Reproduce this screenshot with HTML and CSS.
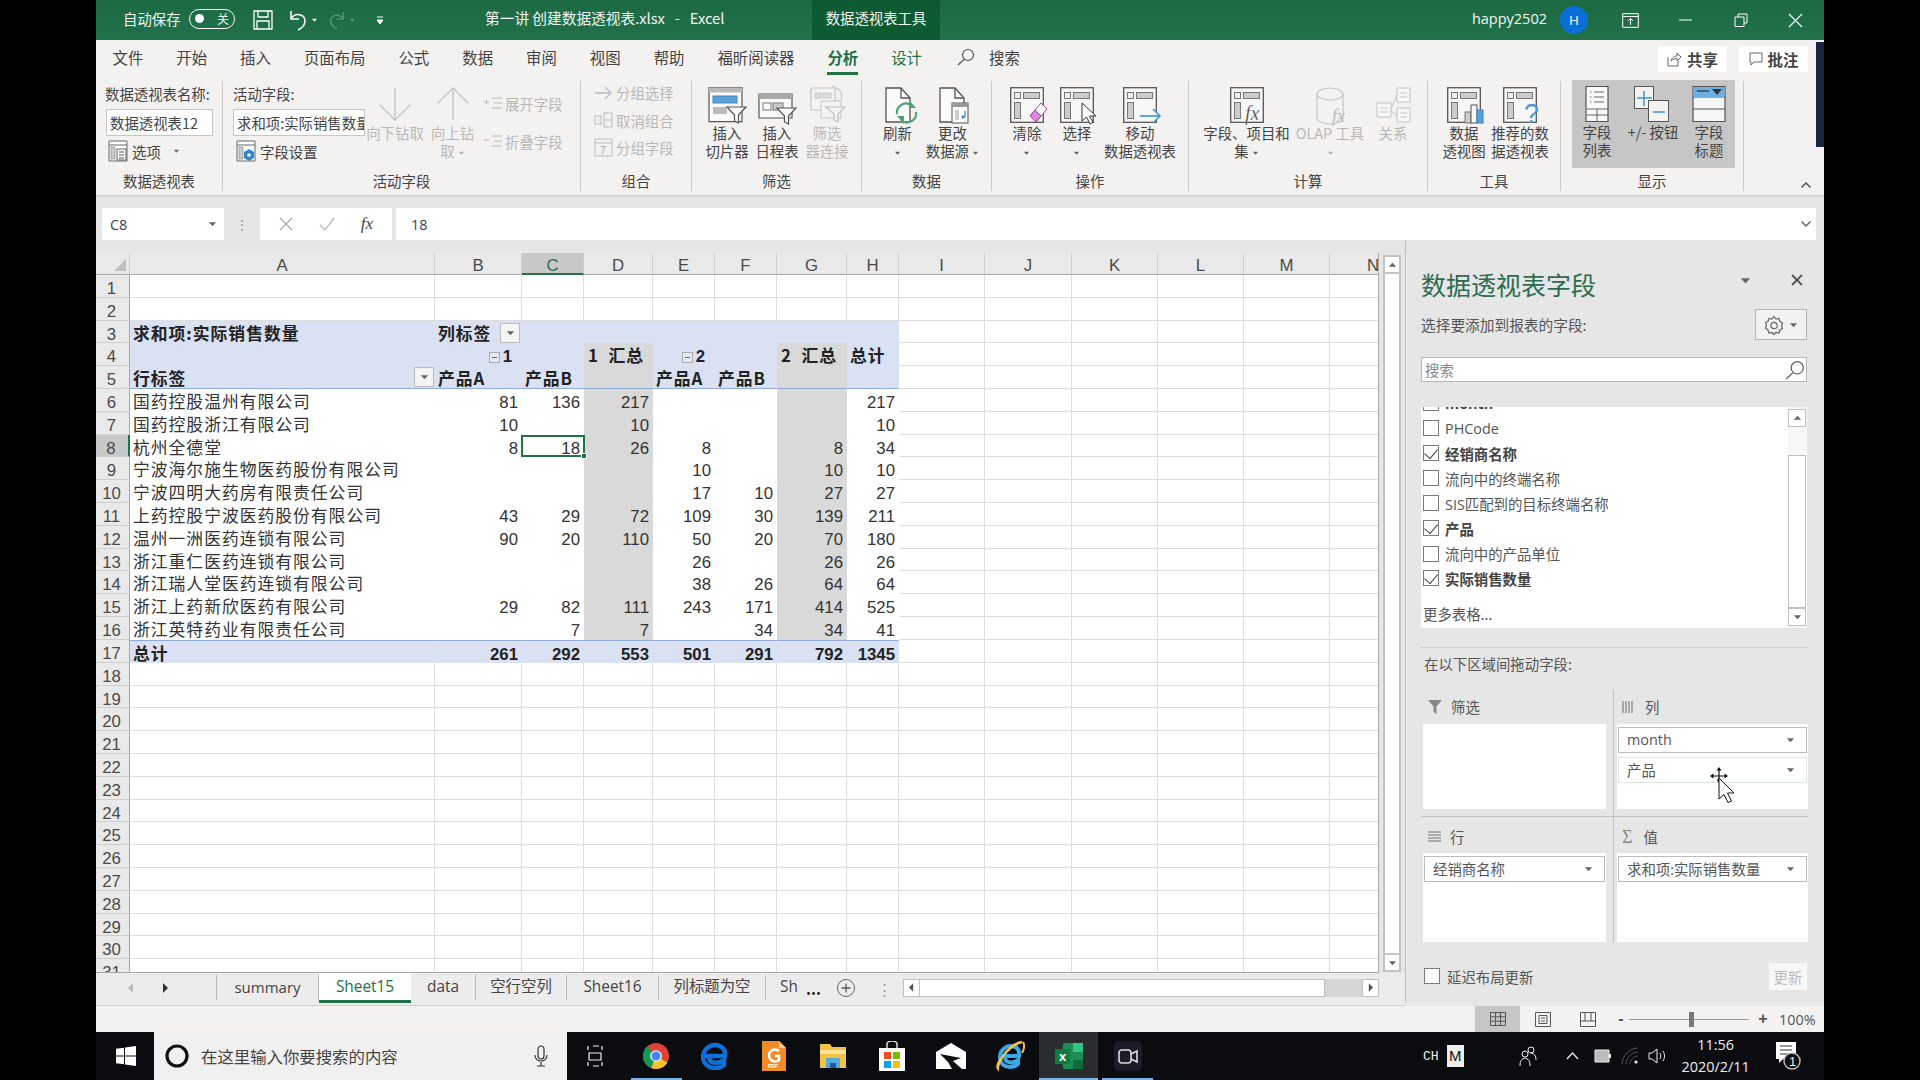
FILE: index.html
```html
<!DOCTYPE html>
<html lang="zh-CN">
<head>
<meta charset="utf-8">
<title>第一讲 创建数据透视表.xlsx - Excel</title>
<link rel="stylesheet" href="styles.css">
</head>
<body>
<svg class="defs" width="0" height="0">
  <symbol id="pv" viewBox="0 0 34 36">
    <rect x=".7" y=".7" width="32.6" height="34.6" fill="#f7f7f7" stroke="#555" stroke-width="1.3"/>
    <rect x="4.5" y="5.5" width="6" height="6" fill="#eee" stroke="#777"/>
    <rect x="13.5" y="5.5" width="16" height="6" fill="#ccc" stroke="#777"/>
    <rect x="4.5" y="15.5" width="6" height="16" fill="#ccc" stroke="#777"/>
  </symbol>
  <symbol id="doc" viewBox="0 0 26 36">
    <path d="M1 1h15l9 10v24H1z" fill="#fbfbfb" stroke="#555" stroke-width="1.3"/>
    <path d="M16 1v10h9" fill="none" stroke="#555" stroke-width="1.3"/>
  </symbol>
  <symbol id="dd" viewBox="0 0 10 6"><path d="M1 1h8L5 5.5z" fill="#666"/></symbol>
</svg>
<div class="app">
  <header class="titlebar">
    <div class="qa">
      <span class="qa-label">自动保存</span>
      <span class="toggle"><i class="knob"></i><b>关</b></span>
      <svg class="q-save" width="20" height="20" viewBox="0 0 20 20"><path d="M1 1h18v18H1z M5 1v6h10V1 M4 19v-8h12v8" fill="none" stroke="#fff" stroke-width="1.3"/></svg>
      <svg class="q-undo" width="18" height="22" viewBox="0 0 18 22"><path d="M2 2v8h8 M2 10c4-7 14-5 14 2 0 4-3 7-7 9" fill="none" stroke="#fff" stroke-width="1.5"/></svg>
      <svg class="q-car" width="7" height="4" viewBox="0 0 10 6"><path d="M1 1h8L5 5.5z" fill="#e6f0ea"/></svg>
      <svg class="q-redo" width="16" height="20" viewBox="0 0 18 22"><path d="M16 2v8H8 M16 10C12 3 2 5 2 12c0 4 3 7 7 9" fill="none" stroke="#5d9477" stroke-width="1.5"/></svg>
      <svg class="q-car" width="7" height="4" viewBox="0 0 10 6"><path d="M1 1h8L5 5.5z" fill="#5d9477"/></svg>
      <svg class="q-more" width="8" height="10" viewBox="0 0 8 10"><path d="M1 2h6M1 5h6L4 9z" stroke="#fff" fill="#fff"/></svg>
    </div>
    <div class="doc">第一讲 创建数据透视表.xlsx &nbsp;&nbsp;-&nbsp;&nbsp; Excel</div>
    <div class="tool">数据透视表工具</div>
    <div class="user">
      <span class="uname">happy2502</span>
      <span class="avatar">H</span>
      <span class="wbtn"><svg width="17" height="15" viewBox="0 0 17 15"><path d="M.7.7h15.6v13.6H.7z M.7 3.5h15.6 M8.5 12V6 M6 8l2.5-2.5L11 8" fill="none" stroke="#fff"/></svg></span>
      <span class="wbtn"><svg width="13" height="2" viewBox="0 0 13 2"><path d="M0 1h13" stroke="#fff"/></svg></span>
      <span class="wbtn"><svg width="14" height="14" viewBox="0 0 14 14"><path d="M1 4h9v9.500H1z M4 4V1h9v9h-3" fill="none" stroke="#fff"/></svg></span>
      <span class="wbtn"><svg width="15" height="15" viewBox="0 0 15 15"><path d="M1 1l13 13M14 1L1 14" stroke="#fff" stroke-width="1.2"/></svg></span>
    </div>
  </header>

  <nav class="tabs">
    <span class="tab">文件</span><span class="tab">开始</span><span class="tab">插入</span><span class="tab">页面布局</span><span class="tab">公式</span><span class="tab">数据</span><span class="tab">审阅</span><span class="tab">视图</span><span class="tab">帮助</span><span class="tab">福昕阅读器</span>
    <span class="tab tab-on">分析</span><span class="tab tab-ctx">设计</span>
    <span class="tab tab-search"><svg width="18" height="18" viewBox="0 0 18 18"><circle cx="11" cy="7" r="5.5" fill="none" stroke="#555" stroke-width="1.2"/><path d="M7 11.500L1 17" stroke="#555" stroke-width="1.2"/></svg>搜索</span>
    <span class="share"><svg width="15" height="15" viewBox="0 0 15 15"><path d="M1 5v9h10V9 M4 9c1-4 4-5 6-5V1l4 4-4 4V6.500C8 6.500 6 7 4 9z" fill="none" stroke="#666"/></svg><b>共享</b></span>
    <span class="share"><svg width="14" height="14" viewBox="0 0 14 14"><path d="M1 1h12v9H5l-3 3v-3H1z" fill="none" stroke="#666"/></svg><b>批注</b></span>
  </nav>

  <section class="ribbon">
    <div class="grp g1">
      <div class="body col">
        <div class="fl">数据透视表名称:</div>
        <div class="inp inp1">数据透视表12</div>
        <div class="sm"><svg width="20" height="22" viewBox="0 0 20 22"><path d="M1 1h18v20H1z M1 5h18" fill="#fff" stroke="#666"/><rect x="3" y="7" width="4" height="12" fill="#ccc" stroke="#777" stroke-width=".6"/><rect x="9" y="9" width="9" height="11" fill="#fff" stroke="#666"/><path d="M11 12h5M11 15h5M11 18h5" stroke="#555"/></svg>选项<svg class="car" width="7" height="4"><use href="#dd"/></svg></div>
      </div>
      <div class="glabel">数据透视表</div>
    </div>

    <div class="grp g2">
      <div class="body row">
        <div class="col af">
          <div class="fl">活动字段:</div>
          <div class="inp inp2">求和项:实际销售数量</div>
          <div class="sm"><svg width="20" height="22" viewBox="0 0 20 22"><path d="M1 1h18v20H1z M1 5h18" fill="#fff" stroke="#666"/><rect x="3" y="7" width="4" height="12" fill="#ccc" stroke="#777" stroke-width=".6"/><path d="M13 9l5 3v6l-5 3-5-3v-6z" fill="#2f86c9"/><circle cx="13" cy="15" r="1.800" fill="#fff"/></svg>字段设置</div>
        </div>
        <div class="big w60 dis"><div class="ico"><svg width="36" height="41" viewBox="0 0 36 41"><path d="M18 4v32M3 21l15 15 15-15" fill="none" stroke="#c4c4c4" stroke-width="1.400"/></svg></div><span>向下钻取</span></div>
        <div class="big w55 dis"><div class="ico"><svg width="36" height="41" viewBox="0 0 36 41"><path d="M18 36V4M3 19L18 4l15 15" fill="none" stroke="#c4c4c4" stroke-width="1.400"/></svg></div><span>向上钻<br>取 <svg class="car" width="7" height="4"><use href="#dd" opacity=".45"/></svg></span></div>
        <div class="col exp dis">
          <div class="sm2"><svg width="20" height="14" viewBox="0 0 20 14"><path d="M1 6h5M3.500 3.500v5 M9 2h10M11 7h8M9 12h10" stroke="#b9b9b9" fill="none"/></svg>展开字段</div>
          <div class="sm2"><svg width="20" height="14" viewBox="0 0 20 14"><path d="M1 6h5 M9 2h10M11 7h8M9 12h10" stroke="#b9b9b9" fill="none"/></svg>折叠字段</div>
        </div>
      </div>
      <div class="glabel">活动字段</div>
    </div>

    <div class="grp g3">
      <div class="body col grp3 dis">
        <div class="sm3"><svg width="19" height="14" viewBox="0 0 19 14"><path d="M1 7h16M11 1l6 6-6 6" fill="none" stroke="#bbb" stroke-width="1.300"/></svg>分组选择</div>
        <div class="sm3"><svg width="19" height="18" viewBox="0 0 19 18"><rect x="1" y="5" width="6" height="8" fill="none" stroke="#bbb"/><path d="M10 2h8v14h-8z M10 9h8 M3 9h2" fill="none" stroke="#bbb"/></svg>取消组合</div>
        <div class="sm3"><svg width="19" height="19" viewBox="0 0 19 19"><path d="M1 1h17v17H1z M1 5h17" fill="none" stroke="#bbb"/><text x="6" y="16" font-size="11" fill="#aaa" font-family="Liberation Sans">7</text></svg>分组字段</div>
      </div>
      <div class="glabel">组合</div>
    </div>

    <div class="grp g4">
      <div class="body row">
        <div class="big w50"><div class="ico"><svg width="44" height="41" viewBox="0 0 44 41"><path d="M4 3.700h33v34H4z" fill="#fafafa" stroke="#555" stroke-width="1.200"/><rect x="4" y="3.500" width="33" height="5" fill="#bbb"/><rect x="8" y="12" width="24" height="7" fill="#5aa2de" stroke="#4584b8"/><rect x="8" y="23" width="14" height="7" fill="#bbb"/><path d="M22 23h19l-7.500 8v8l-4-2v-6z" fill="#fafafa" stroke="#555" stroke-width="1.200"/></svg></div><span>插入<br>切片器</span></div>
        <div class="big w50"><div class="ico"><svg width="44" height="41" viewBox="0 0 44 41"><path d="M4 10h33v24H4z" fill="#fafafa" stroke="#555" stroke-width="1.200"/><rect x="4" y="10" width="33" height="5" fill="#aaa"/><rect x="8" y="19" width="8" height="7" fill="none" stroke="#777"/><rect x="18" y="19" width="10" height="7" fill="#ccc" stroke="#777"/><path d="M22 24h19l-7.500 8v8l-4-2v-6z" fill="#fafafa" stroke="#555" stroke-width="1.200"/></svg></div><span>插入<br>日程表</span></div>
        <div class="big w50 dis"><div class="ico"><svg width="44" height="41" viewBox="0 0 44 41"><path d="M6 4h24v22H6z" fill="#f3f3f3" stroke="#c4c4c4" stroke-width="1.200"/><path d="M10 9h6v5h-6z M18 9h8v5h-8z" fill="#ddd" stroke="#c8c8c8"/><path d="M27 2l6 3a9 9 0 0 1 3 11" fill="none" stroke="#c4c4c4" stroke-width="1.200"/><path d="M16 17h20v17H16z" fill="#f3f3f3" stroke="#c4c4c4"/><path d="M21 23h19l-7 7v8l-4-2v-6z" fill="#f3f3f3" stroke="#c0c0c0" stroke-width="1.200"/></svg></div><span>筛选<br>器连接</span></div>
      </div>
      <div class="glabel">筛选</div>
    </div>

    <div class="grp g5">
      <div class="body row">
        <div class="big w55"><div class="ico"><svg width="44" height="41" viewBox="0 0 44 41"><use href="#doc" x="9" y="3" width="26" height="36"/><path d="M21 30a9 9 0 0 1 15-8" fill="none" stroke="#4aa56e" stroke-width="2.200"/><path d="M33 16v8h7z" fill="#4aa56e"/><path d="M40 28a9 9 0 0 1-15 8" fill="none" stroke="#4aa56e" stroke-width="2.200"/><path d="M28 40v-8h-7z" fill="#4aa56e"/></svg></div><span>刷新<br><svg class="car" width="7" height="4"><use href="#dd"/></svg></span></div>
        <div class="big w55"><div class="ico"><svg width="44" height="41" viewBox="0 0 44 41"><use href="#doc" x="8" y="3" width="26" height="36"/><rect x="21" y="19" width="16" height="20" fill="#fafafa" stroke="#555"/><rect x="21" y="19" width="16" height="4" fill="#999"/><rect x="24" y="26" width="4" height="10" fill="#ccc"/><path d="M34 27v6h-3M32.500 31.500L31 33l1.500 1.500" fill="none" stroke="#2f86c9" stroke-width="1.200"/></svg></div><span>更改<br>数据源 <svg class="car" width="7" height="4"><use href="#dd"/></svg></span></div>
      </div>
      <div class="glabel">数据</div>
    </div>

    <div class="grp g6">
      <div class="body row">
        <div class="big w50"><div class="ico"><svg width="44" height="41" viewBox="0 0 44 41"><use href="#pv" x="5" y="3" width="34" height="36"/><path d="M25 32l11-13 6 6-11 13z" fill="#fff" stroke="#a349a4"/><path d="M25 32l5-6 6 6-5 6z" fill="#d98ad8" stroke="#a349a4"/></svg></div><span>清除<br><svg class="car" width="7" height="4"><use href="#dd"/></svg></span></div>
        <div class="big w50"><div class="ico"><svg width="44" height="41" viewBox="0 0 44 41"><use href="#pv" x="5" y="3" width="34" height="36"/><path d="M27 19v18l4.500-4 3.500 7 3-1.500-3.500-6.500H41z" fill="#fff" stroke="#333"/></svg></div><span>选择<br><svg class="car" width="7" height="4"><use href="#dd"/></svg></span></div>
        <div class="big w76"><div class="ico"><svg width="44" height="41" viewBox="0 0 44 41"><use href="#pv" x="5" y="3" width="34" height="36"/><path d="M22 32h20M35 25l7 7-7 7" fill="#f3f2f1" stroke="#2f8fd6" stroke-width="1.400"/></svg></div><span>移动<br>数据透视表</span></div>
      </div>
      <div class="glabel">操作</div>
    </div>

    <div class="grp g7">
      <div class="body row">
        <div class="big w97"><div class="ico"><svg width="44" height="41" viewBox="0 0 44 41"><use href="#pv" x="5" y="3" width="34" height="36"/><text x="20" y="36" font-family="Liberation Serif" font-style="italic" font-size="20" fill="#333" stroke="#f7f7f7" stroke-width=".3">fx</text></svg></div><span>字段、项目和<br>集 <svg class="car" width="7" height="4"><use href="#dd"/></svg></span></div>
        <div class="big w70 dis"><div class="ico"><svg width="44" height="41" viewBox="0 0 44 41"><path d="M9 10v24a13 6 0 0 0 26 0V10" fill="none" stroke="#c4c4c4" stroke-width="1.200"/><ellipse cx="22" cy="10" rx="13" ry="6" fill="none" stroke="#c4c4c4" stroke-width="1.200"/><text x="24" y="38" font-family="Liberation Serif" font-style="italic" font-size="18" fill="#bbb">fx</text></svg></div><span>OLAP 工具<br><svg class="car" width="7" height="4"><use href="#dd" opacity=".45"/></svg></span></div>
        <div class="big w56 dis"><div class="ico"><svg width="44" height="41" viewBox="0 0 44 41"><path d="M6 19h14v14H6z M26 4h13v14H26z M26 24h13v14H26z" fill="#f7f7f7" stroke="#c4c4c4"/><path d="M20 25l6-14M20 27l6 4 M9 24h8M9 28h8M29 9h7M29 13h7M29 29h7M29 33h7" fill="none" stroke="#c4c4c4"/></svg></div><span>关系</span></div>
      </div>
      <div class="glabel">计算</div>
    </div>

    <div class="grp g8">
      <div class="body row">
        <div class="big w56"><div class="ico"><svg width="44" height="41" viewBox="0 0 44 41"><use href="#pv" x="5" y="3" width="34" height="36"/><rect x="23" y="28" width="6" height="11" fill="#ccc" stroke="#777"/><rect x="29" y="21" width="6" height="18" fill="#f7f7f7" stroke="#555"/><rect x="35" y="26" width="6" height="13" fill="#5aa2de" stroke="#3d7fb5"/></svg></div><span>数据<br>透视图</span></div>
        <div class="big w56"><div class="ico"><svg width="44" height="41" viewBox="0 0 44 41"><use href="#pv" x="5" y="3" width="34" height="36"/><text x="26" y="39" font-family="Liberation Sans" font-size="27" fill="#4b97d6">?</text></svg></div><span>推荐的数<br>据透视表</span></div>
      </div>
      <div class="glabel">工具</div>
    </div>

    <div class="grp g9">
      <div class="body row on">
        <div class="big w50"><div class="ico"><svg width="44" height="41" viewBox="0 0 44 41"><path d="M11 3.500h22v35H11z" fill="#fafafa" stroke="#555" stroke-width="1.200"/><path d="M15 9h1.500M19 9h10M15 14h1.500M19 14h10M15 19h1.500M19 19h10 M11 26h22M11 32h22M22 26v12" fill="none" stroke="#666"/></svg></div><span>字段<br>列表</span></div>
        <div class="big w62"><div class="ico"><svg width="44" height="41" viewBox="0 0 44 41"><rect x="3.500" y="3.500" width="19" height="22" fill="#f3f3f3" stroke="#555"/><path d="M13 8v15M6 15h15" stroke="#3f92d2" stroke-width="1.500"/><rect x="17.500" y="17.500" width="20" height="21" fill="#f3f3f3" stroke="#555"/><path d="M22 29h12" stroke="#3f92d2" stroke-width="1.500"/></svg></div><span>+/- 按钮</span></div>
        <div class="big w50"><div class="ico"><svg width="44" height="41" viewBox="0 0 44 41"><path d="M6 3.500h32v35H6z M6 14h32 M6 26h32" fill="#f6f6f6" stroke="#555" stroke-width="1.200"/><rect x="6.500" y="4" width="31" height="10" fill="#6aaee2"/><path d="M10 8h12" stroke="#333" stroke-width="1.300"/><path d="M25 6h10l-5 6z" fill="#333"/></svg></div><span>字段<br>标题</span></div>
      </div>
      <div class="glabel">显示</div>
    </div>
    <svg class="collapse" width="12" height="8" viewBox="0 0 12 8"><path d="M1.500 6.500L6 2l4.500 4.500" fill="none" stroke="#555" stroke-width="1.500"/></svg>
    <i class="edge"></i>
  </section>

  <div class="fbar">
    <div class="namebox"><span>C8</span><svg width="9" height="6"><use href="#dd"/></svg></div>
    <div class="fdots">⋮</div>
    <div class="fbtns">
      <svg width="14" height="14" viewBox="0 0 14 14"><path d="M1 1l12 12M13 1L1 13" stroke="#aaa" stroke-width="1.300"/></svg>
      <svg width="16" height="14" viewBox="0 0 16 14"><path d="M1 8l5 5L15 1" fill="none" stroke="#bbb" stroke-width="1.300"/></svg>
      <em>fx</em>
    </div>
    <div class="finput"><span>18</span><svg class="fexp" width="12" height="8" viewBox="0 0 12 8"><path d="M1.500 1.500L6 6l4.500-4.500" fill="none" stroke="#666" stroke-width="1.500"/></svg></div>
  </div>

  <div class="work">
    <div class="leftcol">
      <div class="sheetrow">
        <div class="gridwrap">
          <table class="grid">
            <colgroup><col class="k0"><col class="k-a"><col class="k-b"><col class="k-c"><col class="k-d"><col class="k-e"><col class="k-f"><col class="k-g"><col class="k-h"><col class="k-i"><col class="k-j"><col class="k-k"><col class="k-l"><col class="k-m"><col class="k-n"></colgroup>
            <thead>
              <tr class="hd"><th class="corner"><i></i></th><th>A</th><th>B</th><th class="sel">C</th><th>D</th><th>E</th><th>F</th><th>G</th><th>H</th><th>I</th><th>J</th><th>K</th><th>L</th><th>M</th><th class="clip">N</th></tr>
            </thead>
            <tbody>
              <tr><th>1</th><td><td><td><td><td><td><td><td><td><td><td><td><td><td></tr>
              <tr><th>2</th><td><td><td><td><td><td><td><td><td><td><td><td><td><td></tr>
              <tr><th>3</th><td class="p b t">求和项:实际销售数量</td><td class="p b t"><span class="hasf">列标签<i class="fbtn fb1"><svg width="9" height="6"><use href="#dd"/></svg></i></span></td><td class="p"><td class="p"><td class="p"><td class="p"><td class="p"><td class="p"><td><td><td><td><td><td></tr>
              <tr><th>4</th><td class="p"></td><td class="p b pm"><i class="minus"></i>1</td><td class="p"></td><td class="g b t">1&nbsp; 汇总</td><td class="p b pm"><i class="minus"></i>2</td><td class="p"></td><td class="g b t">2&nbsp; 汇总</td><td class="p b t">总计</td><td><td><td><td><td><td></tr>
              <tr class="r5"><th>5</th><td class="p b t">行标签<i class="fbtn fb2"><svg width="9" height="6"><use href="#dd"/></svg></i></td><td class="p b t">产品A</td><td class="p b t">产品B</td><td class="g"></td><td class="p b t">产品A</td><td class="p b t">产品B</td><td class="g"></td><td class="p"></td><td><td><td><td><td><td></tr>
              <tr><th>6</th><td class="w t">国药控股温州有限公司</td><td class="w">81</td><td class="w">136</td><td class="g">217</td><td class="w"></td><td class="w"></td><td class="g"></td><td class="w">217</td><td><td><td><td><td><td></tr>
              <tr><th>7</th><td class="w t">国药控股浙江有限公司</td><td class="w">10</td><td class="w"></td><td class="g">10</td><td class="w"></td><td class="w"></td><td class="g"></td><td class="w">10</td><td><td><td><td><td><td></tr>
              <tr><th class="rsel">8</th><td class="w t">杭州全德堂</td><td class="w">8</td><td class="w cur">18<i class="curbox"><i class="handle"></i></i></td><td class="g">26</td><td class="w">8</td><td class="w"></td><td class="g">8</td><td class="w">34</td><td><td><td><td><td><td></tr>
              <tr><th>9</th><td class="w t">宁波海尔施生物医药股份有限公司</td><td class="w"></td><td class="w"></td><td class="g"></td><td class="w">10</td><td class="w"></td><td class="g">10</td><td class="w">10</td><td><td><td><td><td><td></tr>
              <tr><th>10</th><td class="w t">宁波四明大药房有限责任公司</td><td class="w"></td><td class="w"></td><td class="g"></td><td class="w">17</td><td class="w">10</td><td class="g">27</td><td class="w">27</td><td><td><td><td><td><td></tr>
              <tr><th>11</th><td class="w t">上药控股宁波医药股份有限公司</td><td class="w">43</td><td class="w">29</td><td class="g">72</td><td class="w">109</td><td class="w">30</td><td class="g">139</td><td class="w">211</td><td><td><td><td><td><td></tr>
              <tr><th>12</th><td class="w t">温州一洲医药连锁有限公司</td><td class="w">90</td><td class="w">20</td><td class="g">110</td><td class="w">50</td><td class="w">20</td><td class="g">70</td><td class="w">180</td><td><td><td><td><td><td></tr>
              <tr><th>13</th><td class="w t">浙江重仁医药连锁有限公司</td><td class="w"></td><td class="w"></td><td class="g"></td><td class="w">26</td><td class="w"></td><td class="g">26</td><td class="w">26</td><td><td><td><td><td><td></tr>
              <tr><th>14</th><td class="w t">浙江瑞人堂医药连锁有限公司</td><td class="w"></td><td class="w"></td><td class="g"></td><td class="w">38</td><td class="w">26</td><td class="g">64</td><td class="w">64</td><td><td><td><td><td><td></tr>
              <tr><th>15</th><td class="w t">浙江上药新欣医药有限公司</td><td class="w">29</td><td class="w">82</td><td class="g">111</td><td class="w">243</td><td class="w">171</td><td class="g">414</td><td class="w">525</td><td><td><td><td><td><td></tr>
              <tr><th>16</th><td class="w t">浙江英特药业有限责任公司</td><td class="w"></td><td class="w">7</td><td class="g">7</td><td class="w"></td><td class="w">34</td><td class="g">34</td><td class="w">41</td><td><td><td><td><td><td></tr>
              <tr class="r17"><th>17</th><td class="p b t">总计</td><td class="p b">261</td><td class="p b">292</td><td class="p b">553</td><td class="p b">501</td><td class="p b">291</td><td class="p b">792</td><td class="p b">1345</td><td><td><td><td><td><td></tr>
              <tr><th>18</th><td><td><td><td><td><td><td><td><td><td><td><td><td><td></tr>
              <tr><th>19</th><td><td><td><td><td><td><td><td><td><td><td><td><td><td></tr>
              <tr><th>20</th><td><td><td><td><td><td><td><td><td><td><td><td><td><td></tr>
              <tr><th>21</th><td><td><td><td><td><td><td><td><td><td><td><td><td><td></tr>
              <tr><th>22</th><td><td><td><td><td><td><td><td><td><td><td><td><td><td></tr>
              <tr><th>23</th><td><td><td><td><td><td><td><td><td><td><td><td><td><td></tr>
              <tr><th>24</th><td><td><td><td><td><td><td><td><td><td><td><td><td><td></tr>
              <tr><th>25</th><td><td><td><td><td><td><td><td><td><td><td><td><td><td></tr>
              <tr><th>26</th><td><td><td><td><td><td><td><td><td><td><td><td><td><td></tr>
              <tr><th>27</th><td><td><td><td><td><td><td><td><td><td><td><td><td><td></tr>
              <tr><th>28</th><td><td><td><td><td><td><td><td><td><td><td><td><td><td></tr>
              <tr><th>29</th><td><td><td><td><td><td><td><td><td><td><td><td><td><td></tr>
              <tr><th>30</th><td><td><td><td><td><td><td><td><td><td><td><td><td><td></tr>
              <tr><th>31</th><td><td><td><td><td><td><td><td><td><td><td><td><td><td></tr>
            </tbody>
          </table>
        </div>
        <div class="vscroll">
          <i class="sb-btn"><svg width="9" height="6" viewBox="0 0 10 6"><path d="M1 5h8L5 .5z" fill="#666"/></svg></i>
          <i class="sb-thumb"></i>
          <i class="sb-btn"><svg width="9" height="6"><use href="#dd"/></svg></i>
        </div>
      </div>
      <div class="sheettabs">
        <div class="nav"><svg width="6" height="10" viewBox="0 0 6 10"><path d="M5 0v10L0 5z" fill="#bbb"/></svg><svg width="6" height="10" viewBox="0 0 6 10"><path d="M1 0v10l5-5z" fill="#333"/></svg></div>
        <span class="st st1">summary</span><span class="st st-on">Sheet15</span><span class="st st3">data</span><span class="st st4">空行空列</span><span class="st st5">Sheet16</span><span class="st st6">列标题为空</span><span class="st st7">Sh</span><span class="more">...</span>
        <svg class="addst" width="20" height="20" viewBox="0 0 20 20"><circle cx="10" cy="10" r="8.500" fill="none" stroke="#666"/><path d="M10 5.500v9M5.500 10h9" stroke="#555" stroke-width="1.300"/></svg>
        <span class="vd">⋮</span>
        <div class="hscroll"><i class="hb"><svg width="5" height="9" viewBox="0 0 6 10"><path d="M5 0v10L0 5z" fill="#555"/></svg></i><i class="hthumb"></i><i class="hrest"></i><i class="hb"><svg width="5" height="9" viewBox="0 0 6 10"><path d="M1 0v10l5-5z" fill="#555"/></svg></i></div>
      </div>
    </div>

    <aside class="panel">
      <div class="p-head">
        <h2>数据透视表字段</h2>
        <svg class="p-car" width="13" height="7" viewBox="0 0 10 6"><path d="M1 1h8L5 5.500z" fill="#666"/></svg>
        <svg class="p-x" width="12" height="12" viewBox="0 0 12 12"><path d="M1 1l10 10M11 1L1 11" stroke="#555" stroke-width="1.800"/></svg>
      </div>
      <div class="p-sub">
        <span>选择要添加到报表的字段:</span>
        <span class="gearbtn"><svg width="20" height="20" viewBox="0 0 20 20"><path d="M10 1.500l2 2.500 3-.5 1 3 2.500 1.500-1 3 1 2.500-2.500 1.500-1 3-3-.5-2 2-2-2-3 .5-1-3L1.500 13l1-2.500-1-3L4 6.500l1-3 3 .5z" fill="none" stroke="#666" stroke-width="1.200"/><circle cx="10" cy="10.500" r="3.200" fill="none" stroke="#666" stroke-width="1.200"/></svg><svg width="9" height="6"><use href="#dd"/></svg></span>
      </div>
      <div class="p-search"><span>搜索</span><svg width="20" height="20" viewBox="0 0 18 18"><circle cx="11" cy="7" r="5.500" fill="none" stroke="#666" stroke-width="1.200"/><path d="M7 11.500L1 17" stroke="#666" stroke-width="1.200"/></svg></div>
      <div class="p-list">
        <div class="items">
          <label class="it strong"><i class="cb"></i>month</label>
          <label class="it"><i class="cb"></i>PHCode</label>
          <label class="it strong"><i class="cb on"></i>经销商名称</label>
          <label class="it"><i class="cb"></i>流向中的终端名称</label>
          <label class="it"><i class="cb"></i>SIS匹配到的目标终端名称</label>
          <label class="it strong"><i class="cb on"></i>产品</label>
          <label class="it"><i class="cb"></i>流向中的产品单位</label>
          <label class="it strong"><i class="cb on"></i>实际销售数量</label>
          <div class="moretb">更多表格...</div>
        </div>
        <div class="lscroll">
          <i class="ls-btn"><svg width="9" height="6" viewBox="0 0 10 6"><path d="M1 5h8L5 .5z" fill="#666"/></svg></i>
          <i class="ls-up"></i>
          <i class="ls-thumb"></i>
          <i class="ls-btn"><svg width="9" height="6"><use href="#dd"/></svg></i>
        </div>
      </div>
      <div class="p-drag">在以下区域间拖动字段:</div>
      <div class="areas">
        <div class="area a-tl">
          <div class="a-lab"><svg width="14" height="14" viewBox="0 0 14 14"><path d="M0 0h14L8.500 6.500V14l-3-2V6.500z" fill="#888"/></svg>筛选</div>
          <div class="a-box"></div>
        </div>
        <div class="area a-tr">
          <div class="a-lab"><svg width="12" height="12" viewBox="0 0 12 12"><path d="M1 0v12M4 0v12M7 0v12M10 0v12" stroke="#999" stroke-width="1.600"/></svg>列</div>
          <div class="a-box pad">
            <div class="fld">month<svg width="9" height="6"><use href="#dd"/></svg></div>
            <div class="fld ghost">产品<svg width="9" height="6"><use href="#dd"/></svg></div>
          </div>
        </div>
        <div class="area a-bl">
          <div class="a-lab"><svg width="13" height="11" viewBox="0 0 13 11"><path d="M0 1h13M0 4h13M0 7h13M0 10h13" stroke="#999" stroke-width="1.300"/></svg>行</div>
          <div class="a-box pad">
            <div class="fld">经销商名称<svg width="9" height="6"><use href="#dd"/></svg></div>
          </div>
        </div>
        <div class="area a-br">
          <div class="a-lab"><span class="sigma">Σ</span>值</div>
          <div class="a-box pad">
            <div class="fld">求和项:实际销售数量<svg width="9" height="6"><use href="#dd"/></svg></div>
          </div>
        </div>
      </div>
      <div class="p-foot">
        <label class="defer"><i class="cb cb2"></i>延迟布局更新</label>
        <span class="upd">更新</span>
      </div>
      <svg class="mouse" width="34" height="36" viewBox="0 0 34 36">
        <path d="M11 2v13M4.500 9h13" stroke="#111" stroke-width="1.200"/>
        <path d="M11 0l-2.500 3.500h5z M11 16l-2.500-3.500h5z M2 9l3.500-2.500v5z M20 9l-3.500-2.500v5z" fill="#111"/>
        <path d="M11 11v21l5-4.500 4 8 3.500-1.500-4-8H26z" fill="#fff" stroke="#111"/>
      </svg>
    </aside>
  </div>

  <footer class="status">
    <span class="vbtn von"><svg width="16" height="14" viewBox="0 0 16 14"><path d="M.5.5h15v13H.5z M5.500.5v13 M10.500.5v13 M.5 4.800h15 M.5 9.200h15" fill="none" stroke="#555"/></svg></span>
    <span class="vbtn"><svg width="16" height="15" viewBox="0 0 16 15"><path d="M.5.5h15v14H.5z M4 3.500h8v8H4z M6 6h4M6 9h4" fill="none" stroke="#555"/></svg></span>
    <span class="vbtn"><svg width="16" height="15" viewBox="0 0 16 15"><path d="M.5.5h15v14H.5z M.5 9h15 M5 .5V9 M11 .5V9" fill="none" stroke="#555"/></svg></span>
    <span class="zm">-</span>
    <span class="slider"><i></i></span>
    <span class="zm">+</span>
    <span class="pct">100%</span>
  </footer>
</div>

<div class="taskbar">
  <svg class="win" width="20" height="20" viewBox="0 0 20 20"><path d="M0 2.800l8-1.100v7.800H0z M9 1.600L20 0v9.500H9z M0 10.500h8v7.800l-8-1.100z M9 10.500h11V20L9 18.400z" fill="#fff"/></svg>
  <div class="tsearch">
    <svg width="26" height="26" viewBox="0 0 26 26"><circle cx="13" cy="13" r="10" fill="none" stroke="#111" stroke-width="3.200"/></svg>
    <span>在这里输入你要搜索的内容</span>
    <svg class="mic" width="14" height="22" viewBox="0 0 14 22"><rect x="4" y="1" width="6" height="13" rx="3" fill="none" stroke="#333" stroke-width="1.200"/><path d="M1 10c0 8 12 8 12 0M7 17v4M3 21h8" fill="none" stroke="#333" stroke-width="1.200"/></svg>
  </div>
  <div class="apps">
    <span class="app-i a-view"><svg width="18" height="22" viewBox="0 0 18 22"><path d="M2 1v4M7 1h6M16 1v4 M3 8h12v7H3z M2 17v4M7 21h6M16 17v4" fill="none" stroke="#eee" stroke-width="1.200"/></svg></span>
    <span class="app-i a-open"><svg width="28" height="28" viewBox="0 0 28 28"><circle cx="14" cy="14" r="13" fill="#db4437"/><path d="M14 14L25.300 20.500A13 13 0 0 1 9 26z" fill="#fbc02d"/><path d="M14 14L2.700 20.500A13 13 0 0 1 5 4.500z" fill="#0f9d58"/><path d="M14 14L9 26A13 13 0 0 1 2.700 20.500z" fill="#0f9d58"/><circle cx="14" cy="14" r="5.800" fill="#fff"/><circle cx="14" cy="14" r="4.500" fill="#4285f4"/></svg></span>
    <span class="app-i"><svg width="28" height="28" viewBox="0 0 28 28"><path d="M4 14h20c1-7-4-11-10-11S2 8 2 15s6 11 12 11c4 0 7-1 9-3v-5c-4 3-14 5-15-2" fill="none" stroke="#0d6fd8" stroke-width="4.500"/></svg></span>
    <span class="app-i"><svg width="24" height="30" viewBox="0 0 24 30"><path d="M0 0h17l7 7v23H0z" fill="#f28c28"/><path d="M17 0v7h7z" fill="#f9c98f"/><path d="M17 10a6 6 0 1 0 0 9v-4h-4" fill="none" stroke="#fff" stroke-width="2.500"/><text x="6" y="27" font-size="5" fill="#fff" font-family="Liberation Sans" font-weight="700">PDF</text></svg></span>
    <span class="app-i"><svg width="26" height="24" viewBox="0 0 26 24"><path d="M0 0h10l2 3h14v21H0z" fill="#f3c343"/><path d="M0 6h26v4H0z" fill="#fbe29a"/><path d="M6 14h14v10H6z" fill="#55aadf"/><rect x="10" y="19" width="6" height="5" fill="#1c5f91"/></svg></span>
    <span class="app-i"><svg width="26" height="30" viewBox="0 0 26 30"><path d="M8 7V3a5 3 0 0 1 10 0v4" fill="none" stroke="#ddd" stroke-width="1.500"/><path d="M0 7h26v23H0z" fill="#fff"/><rect x="5" y="11" width="7" height="7" fill="#f25022"/><rect x="14" y="11" width="7" height="7" fill="#7fba00"/><rect x="5" y="20" width="7" height="7" fill="#00a4ef"/><rect x="14" y="20" width="7" height="7" fill="#ffb900"/></svg></span>
    <span class="app-i"><svg width="30" height="26" viewBox="0 0 30 26"><path d="M0 9L15 0l15 9v17H0z" fill="#fff"/><path d="M4 11l21 4-8 3 9 8H16l-4-7z" fill="#111"/></svg></span>
    <span class="app-i"><svg width="30" height="32" viewBox="0 0 30 32"><path d="M6 16h18c1-7-3-10-8-10S5 10 5 17s5 10 10 10c4 0 6-1 8-3v-4c-4 3-12 4-13-2" fill="none" stroke="#38a8e8" stroke-width="4"/><path d="M3 29C-1 24 14 6 27 2c-7 0-16 8-20 16-3 5-4 8-4 11zM28 2c2 3 1 8-1 11" fill="none" stroke="#f3c343" stroke-width="2"/></svg></span>
    <span class="app-i a-xl"><svg width="30" height="28" viewBox="0 0 30 28"><rect x="9" y="1" width="20" height="26" rx="2" fill="#1d8f56"/><rect x="19" y="1" width="10" height="9" fill="#33c481"/><rect x="19" y="18" width="10" height="9" fill="#0f6b3b"/><rect x="1" y="7" width="15" height="15" fill="#107c41"/><text x="5" y="19" font-size="13" font-weight="700" fill="#fff" font-family="Liberation Sans">x</text></svg></span>
    <span class="app-i a-zoom"><svg width="28" height="30" viewBox="0 0 28 30"><rect width="28" height="30" rx="5" fill="#1a1c2a"/><rect x="5" y="9" width="12" height="13" rx="3" fill="none" stroke="#ddd" stroke-width="1.600"/><path d="M17 13l6-3v11l-6-3" fill="none" stroke="#ddd" stroke-width="1.600"/></svg></span>
  </div>
  <div class="tray">
    <span class="ime">CH</span>
    <span class="ime-m">M</span>
    <svg class="t-people" width="20" height="22" viewBox="0 0 20 22"><circle cx="7" cy="9" r="3" fill="none" stroke="#eee"/><path d="M2 21c0-6 2-7 5-8 3 1 5 2 5 8" fill="none" stroke="#eee"/><circle cx="13" cy="5" r="3" fill="none" stroke="#eee"/><path d="M13 8c3 1 5 2 5 7" fill="none" stroke="#eee"/></svg>
    <svg class="t-up" width="13" height="8" viewBox="0 0 13 8"><path d="M1 7l5.500-6L12 7" fill="none" stroke="#eee" stroke-width="1.200"/></svg>
    <svg class="t-bat" width="18" height="16" viewBox="0 0 18 16"><path d="M1 2h14v12H1z" fill="#bbb" stroke="#eee"/><rect x="15" y="6" width="2" height="4" fill="#eee"/></svg>
    <svg class="t-wifi" width="18" height="18" viewBox="0 0 18 18"><path d="M1 17C1 9 9 1 17 1M5 17c0-6 6-12 12-12M9 17c0-4 4-8 8-8" fill="none" stroke="#555"/><circle cx="15" cy="15" r="1.600" fill="#eee"/></svg>
    <svg class="t-vol" width="20" height="18" viewBox="0 0 20 18"><path d="M1 6h3l5-4v14l-5-4H1z" fill="none" stroke="#eee"/><path d="M12 6c1 2 1 4 0 6M15 4c2 3 2 7 0 10" fill="none" stroke="#eee"/></svg>
    <div class="clock"><span>11:56</span><span>2020/2/11</span></div>
    <svg class="t-note" width="26" height="30" viewBox="0 0 26 30"><path d="M1 1h20v17H8l-4 4v-4H1z" fill="#fff"/><path d="M5 5h12M5 9h12M5 13h12" stroke="#333"/><circle cx="17" cy="20" r="8" fill="#111" stroke="#bbb" stroke-width="1.500"/><text x="14" y="25" font-size="13" fill="#eee" font-family="Liberation Sans">1</text></svg>
  </div>
</div>
</body>
</html>
```
FILE: styles.css
```css
* { box-sizing: border-box; }
html, body { margin: 0; padding: 0; height: 100%; overflow: hidden; }
body {
  background: #000;
  font-family: "Noto Sans CJK SC", "Liberation Sans", sans-serif;
  font-size: 14.4px;
  color: #444;
}
i, em { font-style: normal; }
.defs { position: absolute; }

.app { width: 1728px; height: 1032px; margin-left: 96px; display: flex; flex-direction: column; background: #f3f2f1; position: relative; }

/* title bar */
.titlebar { height: 40px; flex: none; background: linear-gradient(#1c6b42, #20704a); color: #f2f6f3; display: flex; align-items: center; }
.qa { width: 385px; display: flex; align-items: center; padding-left: 27px; }
.qa-label { width: 66px; font-size: 14.4px; white-space: nowrap; padding-bottom: 4px; }
.toggle { width: 46px; height: 20px; border: 1.500px solid #fff; border-radius: 10px; display: flex; align-items: center; padding: 0 5px 1px; justify-content: space-between; font-size: 12px; margin-top: -2px; }
.toggle b { font-weight: 400; }
.knob { width: 9px; height: 9px; border-radius: 50%; background: #fff; }
.q-save { margin-left: 18px; }
.q-undo { margin-left: 16px; }
.q-car { margin-left: 4px; }
.q-redo { margin-left: 11px; }
.q-more { margin-left: 20px; }
.doc { width: 331px; padding-left: 4px; padding-bottom: 5px; font-size: 14.700px; white-space: nowrap; }
.tool { width: 128px; height: 40px; background: #0e5a31; display: flex; align-items: center; justify-content: center; font-size: 14.400px; padding-bottom: 5px; }
.user { flex: 1; display: flex; align-items: center; justify-content: flex-end; padding-right: 1px; }
.uname { font-family: "Open Sans", sans-serif; font-size: 14.500px; padding-bottom: 4px; }
.avatar { width: 28px; height: 28px; margin: 0 15px 0 13px; border-radius: 50%; background: #0a6fd6; font-family: "Liberation Sans", sans-serif; font-size: 13px; display: flex; align-items: center; justify-content: center; }
.wbtn { width: 55px; display: flex; justify-content: center; }

/* tabs */
.tabs { height: 40px; flex: none; display: flex; align-items: center; gap: 33px; padding: 0 16px 6px 16.500px; position: relative; }
.tab { font-size: 15.400px; color: #444; white-space: nowrap; position: relative; }
.tab-on { color: #217346; font-weight: 700; }
.tab-on::after { content: ""; position: absolute; left: 0; right: 0; bottom: -7px; height: 3px; background: #217346; }
.tab-ctx { color: #217346; }
.tab-search { display: flex; align-items: center; gap: 14px; margin-left: 2px; }
.share { width: 69px; height: 26px; background: #fff; display: flex; align-items: center; justify-content: center; gap: 5px; font-size: 15.400px; color: #444; margin-top: 4px; }
.share b { font-weight: 700; }
.share:nth-last-child(2) { margin-left: auto; }
.share:last-child { margin-left: -21px; margin-right: 0; }

/* ribbon */
.ribbon { height: 115px; flex: none; display: flex; position: relative; box-shadow: 0 1px 2px rgba(0,0,0,.15); z-index: 2; }
.grp { display: flex; flex-direction: column; height: 110px; margin-top: 1px; border-right: 1px solid #c9c9c9; position: relative; }
.g1 { width: 127px; padding-left: 9px; }
.g2 { width: 358px; padding-left: 10px; }
.g3 { width: 111px; padding-left: 13px; }
.g4 { width: 170px; padding-left: 10px; }
.g5 { width: 130px; padding-left: 8px; }
.g6 { width: 197px; padding-left: 10px; }
.g7 { width: 239px; padding-left: 9px; }
.g8 { width: 133px; padding-left: 8px; }
.g9 { width: 183px; padding-left: 11px; }
.body { height: 90px; flex: none; }
.col { display: flex; flex-direction: column; }
.row { display: flex; }
.on { background: #c6c6c6; width: 163px; height: 88px; margin-top: -1px; }
.glabel { position: absolute; left: 0; right: 0; top: 91px; text-align: center; font-size: 14.400px; line-height: 18px; color: #444; }
.fl { line-height: 18px; padding-top: 4px; height: 22px; white-space: nowrap; }
.inp { height: 27px; margin-top: 6px; background: #fff; border: 1px solid #c6c6c6; line-height: 25px; padding-left: 3px; white-space: nowrap; overflow: hidden; font-size: 14.400px; flex: none; }
.inp1 { width: 107px; margin-left: 1px; }
.inp2 { width: 132px; }
.af { width: 132px; }
.sm { display: flex; align-items: center; gap: 4px; height: 26px; margin-top: 2px; padding-left: 3px; white-space: nowrap; }
.car { margin-left: 8px; vertical-align: middle; }
.big .car { margin: 0; }
.big { display: flex; flex-direction: column; align-items: center; flex: none; font-size: 14.400px; line-height: 18px; text-align: center; }
.big span { display: block; white-space: nowrap; }
.ico { height: 43px; padding-top: 3px; display: flex; justify-content: center; flex: none; }
.ico svg { overflow: visible; }
.w50 { width: 50px; } .w55 { width: 55px; } .w56 { width: 56px; } .w60 { width: 60px; } .w62 { width: 62px; } .w70 { width: 70px; } .w76 { width: 76px; } .w97 { width: 97px; }
.dis, .dis span { color: #b8b8b8; }
.exp { padding-left: 3px; gap: 18px; padding-top: 12px; }
.sm2 { display: flex; align-items: center; gap: 2px; height: 20px; white-space: nowrap; }
.grp3 { margin-top: -2px; }
.sm3 { height: 27.500px; display: flex; align-items: center; gap: 3px; white-space: nowrap; }
.collapse { position: absolute; right: 12px; top: 101px; }
.edge { position: absolute; right: 0; top: -38px; width: 8px; height: 105px; background: #1c2442; }

/* formula bar */
.fbar { height: 45px; flex: none; background: #e6e6e6; padding: 13px 8px 0 6px; display: flex; }
.namebox { width: 122px; height: 32px; background: #fff; display: flex; align-items: center; justify-content: space-between; padding: 0 7px 0 8px; font-family: "Open Sans", sans-serif; font-size: 14.400px; color: #444; }
.fdots { width: 36px; text-align: center; line-height: 32px; color: #999; }
.fbtns { width: 132px; height: 32px; background: #fff; display: flex; align-items: center; justify-content: space-around; padding: 0 6px; }
.fbtns em { font-family: "Liberation Serif", serif; font-style: italic; font-size: 17px; color: #444; }
.finput { flex: 1; height: 32px; margin-left: 4px; background: #fff; display: flex; align-items: center; justify-content: space-between; padding: 0 4px 0 15px; font-family: "Open Sans", sans-serif; font-size: 14.400px; }

/* work area */
.work { height: 766px; flex: none; display: flex; background: #e6e6e6; }
.leftcol { width: 1309px; flex: none; padding-top: 13px; display: flex; flex-direction: column; }
.sheetrow { height: 720px; display: flex; flex: none; }
.gridwrap { width: 1283px; height: 720px; overflow: hidden; background: #fff; flex: none; border-right: 1px solid #a8a8a8; border-bottom: 1px solid #a8a8a8; }
.grid { table-layout: fixed; border-collapse: separate; border-spacing: 0; width: 1284px; font-size: 16.800px; font-family: "Liberation Sans", sans-serif; color: #333; }
.k0 { width: 34px; } .k-a { width: 305px; } .k-b { width: 87px; } .k-c { width: 62px; } .k-d { width: 69px; } .k-e { width: 62px; } .k-f { width: 62px; } .k-g { width: 70px; } .k-h { width: 52px; } .k-i { width: 86px; } .k-j { width: 87px; } .k-k { width: 86px; } .k-l { width: 86px; } .k-m { width: 86px; } .k-n { width: 50px; }
.grid tr { height: 22.800px; }
.grid .hd { height: 22px; }
.grid th { background: #e9e9e9; font-weight: 400; color: #4a4a4a; padding: 6px 0 0; text-align: center; vertical-align: top; border-right: 1px solid #cfcfcf; border-bottom: 1px solid #cfcfcf; line-height: 15px; overflow: hidden; }
.grid .hd th { border-bottom: 1px solid #a8a8a8; border-right: 1px solid #cfcfcf; padding-top: 5px; }
.grid tbody th { text-align: center; padding-right: 2px; border-right: 1px solid #a8a8a8; }
.grid td { padding: 6px 3px 0 4px; vertical-align: top; text-align: right; border-right: 1px solid #dedede; border-bottom: 1px solid #dedede; line-height: 15px; white-space: nowrap; overflow: visible; }
.corner { position: relative; }
.corner i { position: absolute; right: 3px; bottom: 3px; width: 0; height: 0; border-left: 12px solid transparent; border-bottom: 12px solid #c0c0c0; }
.clip { overflow: hidden; text-align: right !important; }
.grid .hd .sel { background: #c8c8c8; color: #2f6f4e; border-bottom: 2px solid #217346; }
.grid tbody .rsel { background: #c8c8c8; color: #4a4a4a; border-right: 2px solid #217346; }
.grid .p { background: #d9e1f2; border-color: #d9e1f2; color: #222; position: relative; }
.grid .g { background: #d9d9d9; border-color: #d9d9d9; color: #333; }
.grid .w { background: #fff; border-color: #fff; }
.grid .t { text-align: left; padding-left: 3px; padding-top: 5px; font-family: "Noto Sans CJK SC", sans-serif; font-size: 16.800px; letter-spacing: 1px; overflow: visible; }
.grid .b { font-weight: 700; color: #222; }
.grid .g.t { font-weight: 700; padding-left: 4px; }
.r5 .p, .r5 .g { border-bottom-color: #8ea9db !important; }
.r17 .p { border-top: 1px solid #8ea9db; }
.hasf { display: block; position: relative; }
.fbtn { position: absolute; width: 20px; height: 20px; background: #f4f4f4; border: 1px solid #bbb; display: flex; align-items: center; justify-content: center; }
.fb1 { right: -2px; top: -3px; }
.fb2 { right: 0; top: 1px; }
.pm { padding-right: 9px !important; }
.minus { display: inline-block; width: 11px; height: 11px; background: #e5e9f3; border: 1px solid #a9a9a9; margin-right: 3px; position: relative; top: 0; vertical-align: -1px; }
.minus::after { content: ""; position: absolute; left: 2px; right: 2px; top: 4px; height: 1px; background: #666; }
.cur { position: relative; }
.curbox { position: absolute; left: -1px; top: 0; right: -2px; bottom: -1px; border: 2px solid #217346; }
.handle { position: absolute; right: -4px; bottom: -4px; width: 6px; height: 6px; background: #217346; border: 1px solid #fff; }
.vscroll { width: 22px; flex: none; padding-left: 4px; padding-top: 2px; display: flex; flex-direction: column; height: 719px; }
.vscroll i { display: flex; align-items: center; justify-content: center; background: #fff; border: 2px solid #c4c4c4; flex: none; }
.vscroll .sb-btn { height: 19px; }
.vscroll .sb-thumb { flex: 1; margin: 0; border-top: none; border-bottom: none; }

.sheettabs { height: 33px; flex: none; display: flex; align-items: center; font-size: 15.400px; background: #ececec; padding-bottom: 3px; border-bottom: 1px solid #d0d0d0; position: relative; }
.nav { width: 120px; flex: none; display: flex; gap: 28px; padding-left: 32px; align-items: center; }
.st { height: 25px; line-height: 24px; text-align: center; border-right: 1px solid #b8b8b8; flex: none; color: #444; white-space: nowrap; font-family: "Open Sans", "Noto Sans CJK SC", sans-serif; }
.st1 { width: 103px; border-left: 1px solid #b8b8b8; font-size: 15px; }
.st-on { width: 92px; background: #fff; color: #217346; border: none; height: 30px; margin-top: 1px; border-bottom: 3px solid #217346; line-height: 28px; }
.st3 { width: 65px; }
.st4 { width: 91px; }
.st5 { width: 92px; }
.st6 { width: 107px; }
.st7 { width: 34px; border: none; overflow: hidden; text-align: left; padding-left: 14px; }
.more { margin-left: 6px; width: 29px; font-weight: 700; color: #222; flex: none; }
.addst { flex: none; margin-left: 1px; }
.vd { width: 43px; flex: none; color: #999; text-align: center; margin-left: 7px; }
.hscroll { width: 476px; height: 18px; flex: none; display: flex; margin-left: -3px; background: #d6d6d6; }
.hscroll i { display: flex; align-items: center; justify-content: center; background: #fff; border: 1px solid #c0c0c0; }
.hb { width: 17px; flex: none; }
.hscroll .hthumb { width: 405px; border-left: none; }
.hscroll .hrest { flex: 1; background: #d6d6d6; border: none; }

/* field panel */
.panel { width: 419px; flex: none; border-left: 1px solid #bdbdbd; padding-left: 15px; padding-right: 17px; position: relative; height: 763px; display: flex; flex-direction: column; }
.p-head { height: 61px; padding-top: 26px; display: flex; align-items: flex-start; position: relative; flex: none; }
.p-head h2 { margin: 0; font-size: 25px; line-height: 36px; font-weight: 400; color: #2b6d4e; white-space: nowrap; }
.p-car { position: absolute; left: 318px; top: 37px; }
.p-x { position: absolute; left: 370px; top: 34px; }
.p-sub { height: 39px; display: flex; align-items: center; justify-content: space-between; flex: none; padding-top: 8px; margin-top: 0; }
.p-sub > span:first-child { color: #555; font-size: 14.700px; }
.gearbtn { width: 52px; height: 31px; border: 1px solid #b5b5b5; background: #f2f2f2; display: flex; align-items: center; justify-content: center; gap: 5px; }
.p-search { height: 25px; margin-top: 17px; background: #fff; border: 1px solid #b5b5b5; display: flex; align-items: center; justify-content: space-between; padding: 0 1px 0 3px; color: #888; flex: none; }
.p-list { height: 221px; margin-top: 25px; background: #fff; display: flex; overflow: hidden; flex: none; position: relative; }
.items { flex: 1; margin-top: -16.500px; }
.it { display: flex; align-items: center; height: 25.100px; color: #555; white-space: nowrap; font-family: "Open Sans", "Noto Sans CJK SC", sans-serif; font-size: 14.400px; }
.it.strong { font-weight: 700; color: #444; }
.cb { display: block; width: 16px; height: 16px; border: 1px solid #7a7a7a; background: #fff; margin-left: 2px; margin-right: 6px; flex: none; position: relative; }
.cb.on::after { content: ""; position: absolute; left: 3px; top: 0; width: 7px; height: 11px; border: solid #444; border-width: 0 1.500px 1.500px 0; transform: rotate(40deg); }
.moretb { margin-top: 12px; padding-left: 2px; color: #555; line-height: 22px; }
.lscroll { width: 19px; flex: none; display: flex; flex-direction: column; padding: 2px 1px 2px 0; background: #f7f7f7; }
.lscroll i { display: flex; align-items: center; justify-content: center; }
.ls-btn { height: 18px; background: #fff; border: 1px solid #c0c0c0; flex: none; }
.ls-up { height: 28px; flex: none; }
.ls-thumb { flex: 1; background: #fff; border: 1px solid #c0c0c0; }
.p-drag { height: 32px; margin-top: 18.500px; border-top: 1px dotted #bbb; padding-top: 6px; padding-left: 3px; line-height: 20px; color: #555; flex: none; }
.areas { display: grid; grid-template-columns: 193px 194px; grid-template-rows: 127px 125px; margin-top: 11px; flex: none; }
.area { display: flex; flex-direction: column; }
.a-tl { border-right: 1px solid #c0c0c0; padding: 0 7px 7px 2px; border-bottom: 1px solid #c0c0c0; }
.a-tr { border-bottom: 1px solid #c0c0c0; padding: 0 0 7px 3px; }
.a-bl { border-right: 1px solid #c0c0c0; padding: 0 7px 0 2px; }
.a-br { padding-left: 3px; }
.a-lab { height: 34px; flex: none; display: flex; align-items: center; gap: 9px; padding-left: 5px; color: #555; }
.a-tr .a-lab { gap: 11px; }
.a-bl .a-lab, .a-br .a-lab { height: 36px; padding-top: 4px; }
.a-br .a-lab { gap: 11px; }
.a-box { flex: 1; background: #fff; }
.pad { padding: 3px 1px; display: flex; flex-direction: column; gap: 4px; }
.fld { height: 26px; flex: none; border: 1px solid #bcbcbc; background: #fff; display: flex; align-items: center; justify-content: space-between; padding: 0 11px 0 8px; color: #555; font-family: "Open Sans", "Noto Sans CJK SC", sans-serif; font-size: 14.400px; white-space: nowrap; }
.ghost { border-color: #dfe6e4; }
.sigma { font-family: "Liberation Serif", serif; font-size: 18px; color: #888; line-height: 18px; }
.p-foot { display: flex; align-items: center; justify-content: space-between; margin-top: 21px; height: 27px; flex: none; }
.defer { display: flex; align-items: center; padding-left: 1px; color: #555; }
.cb2 { margin-right: 7px; }
.upd { width: 38px; height: 27px; background: #f7f7f7; color: #bbb; text-align: center; line-height: 27px; }
.mouse { position: absolute; left: 302px; top: 527px; overflow: visible; }

/* status bar */
.status { height: 26px; flex: none; background: #f3f2f1; display: flex; align-items: center; justify-content: flex-start; padding-left: 1379px; }
.vbtn { width: 45px; height: 26px; display: flex; align-items: center; justify-content: center; flex: none; }
.von { background: #c6c6c6; }
.zm { width: 10px; text-align: center; font-family: "Liberation Sans", sans-serif; font-weight: 700; color: #555; font-size: 16px; margin-left: 6px; }
.slider { width: 120px; height: 1px; background: #999; margin: 0 3px 0 3px; position: relative; }
.slider i { position: absolute; left: 60px; top: -7px; width: 5px; height: 15px; background: #777; }
.pct { margin-left: 11px; font-family: "Open Sans", sans-serif; font-size: 14.400px; color: #555; }

/* taskbar */
.taskbar { width: 1728px; height: 48px; margin-left: 96px; background: #0a0c10; display: flex; align-items: center; position: relative; color: #eee; }
.win { margin-left: 20px; flex: none; }
.tsearch { width: 413px; height: 48px; margin-left: 18px; background: #f0f0f0; display: flex; align-items: center; padding-left: 10px; gap: 11px; flex: none; color: #444; font-size: 16.400px; white-space: nowrap; }
.tsearch .mic { margin-left: auto; margin-right: 19px; }
.apps { display: flex; margin-left: 0; align-items: center; height: 48px; padding-left: 4px; flex: none; }
.app-i { width: 58.900px; height: 48px; display: flex; align-items: center; justify-content: center; flex: none; position: relative; }
.a-view { width: 48px; margin-right: 8px; }
.a-open::after, .a-xl::after, .a-zoom::after { content: ""; position: absolute; left: 4px; right: 4px; bottom: 0; height: 2px; background: #7ab4e8; }
.a-xl { background: #2a2d30; }
.a-xl::after { left: 0; right: 0; }
.tray { flex: 1; display: flex; align-items: center; position: relative; height: 48px; padding-left: 266px; }
.ime { font-family: "Liberation Mono", monospace; font-size: 13px; margin-right: 8px; }
.ime-m { width: 17px; height: 22px; background: #eee; color: #111; font-family: "Liberation Sans", sans-serif; font-size: 15px; text-align: center; line-height: 22px; }
.t-people { margin-left: 54px; }
.t-up { margin-left: 28px; }
.t-bat { margin-left: 15px; }
.t-wifi { margin-left: 9.500px; }
.t-vol { margin-left: 9px; }
.clock { display: flex; flex-direction: column; align-items: center; width: 76px; margin-left: 9.500px; font-size: 14.400px; line-height: 22px; font-family: "Open Sans", sans-serif; color: #eee; }
.t-note { margin-left: 21px; }
```
